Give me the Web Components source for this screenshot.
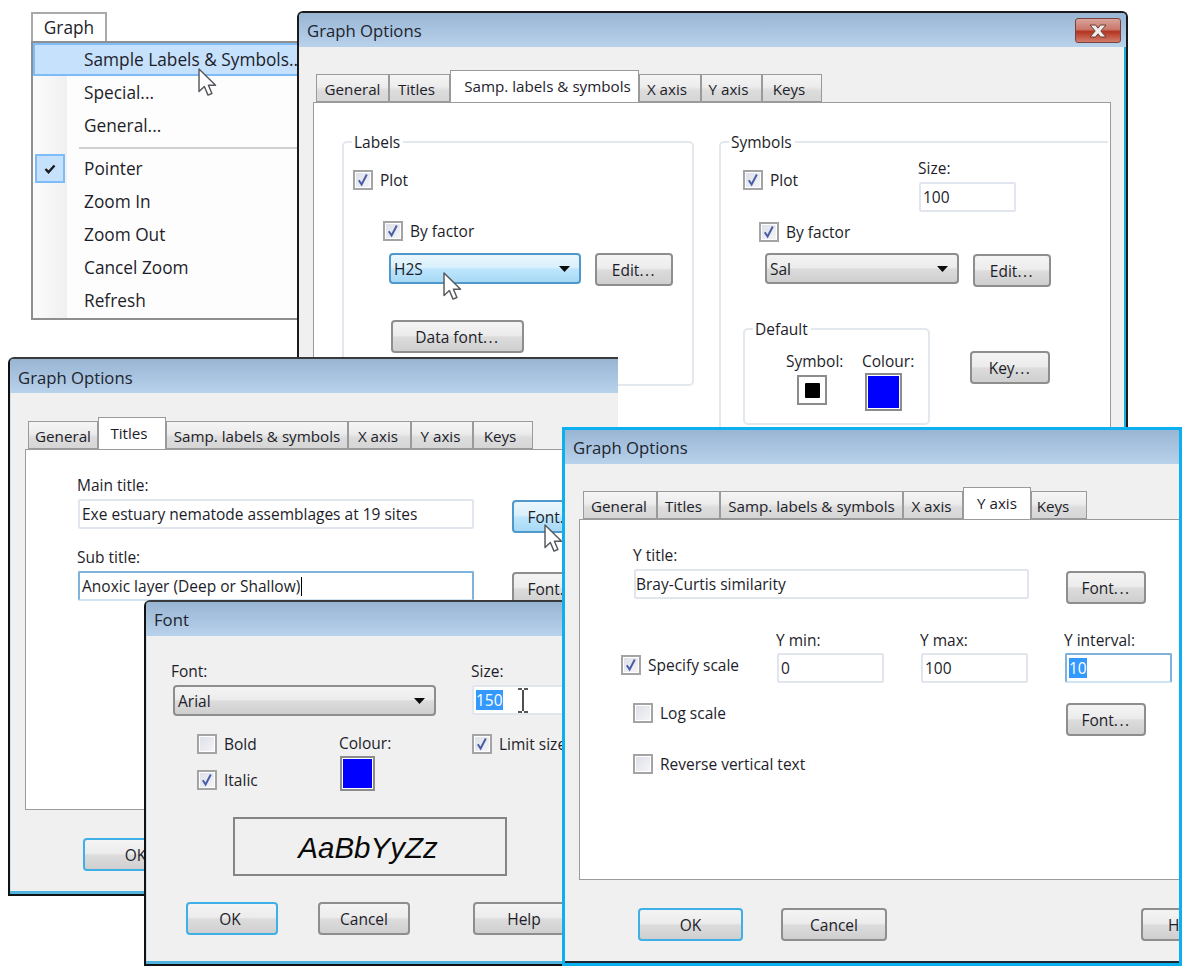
<!DOCTYPE html>
<html>
<head>
<meta charset="utf-8">
<title>Graph Options</title>
<style>
  html, body { margin: 0; background: #fff; }
  body { font: 15.5px/20px "Open Sans", "Noto Sans", sans-serif; color: #1d1d2a; width: 1190px; height: 972px; position: relative; overflow: hidden; }
  .row { display: flex; align-items: flex-start; }
  .col { display: flex; flex-direction: column; align-items: flex-start; flex: none; }
  .dots { font-style: normal; letter-spacing: 1.5px; }
</style>
</head>
<body>

<graph-menu style="z-index:1">
  <menu-item hot>Sample Labels &amp; Symbols...</menu-item>
  <menu-item>Special...</menu-item>
  <menu-item>General...</menu-item>
  <menu-item sep></menu-item>
  <menu-item checked>Pointer</menu-item>
  <menu-item>Zoom In</menu-item>
  <menu-item>Zoom Out</menu-item>
  <menu-item>Cancel Zoom</menu-item>
  <menu-item>Refresh</menu-item>
</graph-menu>
<ui-cursor style="left:198px;top:68px;z-index:2"></ui-cursor>

<!-- back window, samp labels tab -->
<dlg-window heading="Graph Options" closable frame="back" style="left:297px;top:11px;width:831px;height:430px;z-index:3">
  <tab-strip style="margin:23px 0 0 17px">
    <tab-item style="width:73px">General</tab-item>
    <tab-item style="width:61px;padding-right:6px">Titles</tab-item>
    <tab-item active style="width:189px;padding-left:6px">Samp. labels &amp; symbols</tab-item>
    <tab-item style="width:62px;padding-right:6px">X axis</tab-item>
    <tab-item style="width:61px;padding-right:6px">Y axis</tab-item>
    <tab-item style="width:60px;padding-right:6px">Keys</tab-item>
  </tab-strip>
  <tab-panel style="margin-left:14px;width:798px;height:340px;padding-top:29px">
    <div class="row">
      <ui-group legend="Labels" style="margin-left:28px;width:352px;height:254px">
        <ui-check checked style="margin:18px 0 0 9px">Plot</ui-check>
        <div><ui-check checked style="margin:31px 0 0 39px">By factor</ui-check></div>
        <div class="row" style="margin:12px 0 0 45px">
          <ui-combo hot style="width:192px">H2S</ui-combo>
          <ui-btn style="width:78px;margin:0 0 0 14px">Edit<i class="dots">...</i></ui-btn>
        </div>
        <ui-btn style="width:133px;margin:34px 0 0 47px">Data font<i class="dots">...</i></ui-btn>
      </ui-group>
      <ui-group legend="Symbols" open-end style="margin-left:25px;width:389px;height:320px">
        <div class="row" style="margin-top:6px">
          <ui-check checked style="margin:12px 0 0 22px;width:175px">Plot</ui-check>
          <div class="col">
            <ui-label>Size:</ui-label>
            <ui-field style="width:97px;margin:4px 0 0 1px">100</ui-field>
          </div>
        </div>
        <ui-check checked style="margin:10px 0 0 38px">By factor</ui-check>
        <div class="row" style="margin:11px 0 0 44px">
          <ui-combo style="width:194px">Sal</ui-combo>
          <ui-btn style="width:78px;margin:1px 0 0 14px">Edit<i class="dots">...</i></ui-btn>
        </div>
        <div class="row" style="margin:32px 0 0 22px">
          <ui-group legend="Default" style="width:187px;height:106px">
            <div class="row" style="margin:12px 0 0 41px">
              <div class="col" style="width:76px">
                <ui-label>Symbol:</ui-label>
                <ui-swatch mark style="width:30px;height:30px;margin:4px 0 0 11px"></ui-swatch>
              </div>
              <div class="col">
                <ui-label>Colour:</ui-label>
                <ui-swatch style="width:37px;height:38px;margin:2px 0 0 3px"></ui-swatch>
              </div>
            </div>
          </ui-group>
          <ui-btn style="width:80px;margin:32px 0 0 40px">Key<i class="dots">...</i></ui-btn>
        </div>
      </ui-group>
    </div>
  </tab-panel>
  <ui-cursor style="left:144px;top:259px"></ui-cursor>
</dlg-window>

<!-- titles tab -->
<dlg-window heading="Graph Options" frame="clip" style="left:8px;top:357px;width:610px;height:539px;z-index:4;--tb:3px">
  <tab-strip style="margin:24px 0 0 18px">
    <tab-item style="width:70px">General</tab-item>
    <tab-item active style="width:68px;padding-right:6px">Titles</tab-item>
    <tab-item style="width:182px">Samp. labels &amp; symbols</tab-item>
    <tab-item style="width:63px;padding-right:3px">X axis</tab-item>
    <tab-item style="width:62px;padding-right:3px">Y axis</tab-item>
    <tab-item style="width:60px;padding-right:6px">Keys</tab-item>
  </tab-strip>
  <tab-panel style="margin-left:15px;width:576px;height:361px;padding-top:25px">
    <ui-label style="margin-left:51px">Main title:</ui-label>
    <div class="row" style="margin-left:52px">
      <ui-field style="width:396px;margin-top:4px">Exe estuary nematode assemblages at 19 sites</ui-field>
      <ui-btn hot style="width:80px;margin:5px 0 0 38px">Font<i class="dots">...</i></ui-btn>
    </div>
    <ui-label style="margin:14px 0 0 51px">Sub title:</ui-label>
    <div class="row" style="margin-left:52px">
      <ui-field focus caret style="width:396px;margin-top:4px">Anoxic layer (Deep or Shallow)</ui-field>
      <ui-btn style="width:80px;margin:5px 0 0 38px">Font<i class="dots">...</i></ui-btn>
    </div>
  </tab-panel>
  <div class="row" style="margin:28px 0 0 73px">
    <ui-btn focus style="width:105px">OK</ui-btn>
  </div>
  <ui-cursor style="left:534px;top:165px"></ui-cursor>
</dlg-window>

<!-- font picker -->
<dlg-window heading="Font" frame="clip" style="left:144px;top:600px;width:430px;height:366px;z-index:5">
  <div class="row" style="margin:25px 0 0 25px">
    <div class="col" style="width:300px">
      <ui-label>Font:</ui-label>
      <ui-combo style="width:263px;margin:4px 0 0 2px">Arial</ui-combo>
    </div>
    <div class="col">
      <ui-label>Size:</ui-label>
      <ui-field selected style="width:120px;margin:4px 0 0 1px">150</ui-field>
    </div>
  </div>
  <div class="row" style="margin:18px 0 0 51px">
    <div class="col" style="width:142px">
      <ui-check>Bold</ui-check>
      <ui-check checked style="margin-top:16px">Italic</ui-check>
    </div>
    <div class="col" style="width:133px;margin-top:-1px">
      <ui-label>Colour:</ui-label>
      <ui-swatch style="width:35px;height:35px;margin:3px 0 0 1px"></ui-swatch>
    </div>
    <ui-check checked>Limit size</ui-check>
  </div>
  <font-preview style="margin:26px 0 0 87px;width:274px;height:59px">AaBbYyZz</font-preview>
  <div class="row" style="margin:26px 0 0 40px">
    <ui-btn focus style="width:92px;padding-right:4px">OK</ui-btn>
    <ui-btn style="width:92px;margin-left:40px">Cancel</ui-btn>
    <ui-btn style="width:102px;margin-left:63px">Help</ui-btn>
  </div>
  <ui-ibeam style="left:371px;top:86px"></ui-ibeam>
</dlg-window>

<!-- y axis tab, front window -->
<dlg-window heading="Graph Options" frame="active" style="left:562px;top:427px;width:620px;height:539px;z-index:6">
  <tab-strip style="margin:23px 0 0 18px">
    <tab-item style="width:74px;padding-right:2px">General</tab-item>
    <tab-item style="width:63px;padding-right:10px">Titles</tab-item>
    <tab-item style="width:183px">Samp. labels &amp; symbols</tab-item>
    <tab-item style="width:60px;padding-right:3px">X axis</tab-item>
    <tab-item active style="width:68px">Y axis</tab-item>
    <tab-item style="width:56px;padding-right:12px">Keys</tab-item>
  </tab-strip>
  <tab-panel style="margin-left:14px;width:640px;height:361px;padding-top:25px">
    <ui-label style="margin-left:53px">Y title:</ui-label>
    <div class="row" style="margin-left:54px">
      <ui-field style="width:395px;margin-top:4px;padding-left:0">Bray-Curtis similarity</ui-field>
      <ui-btn style="width:80px;margin:6px 0 0 37px">Font<i class="dots">...</i></ui-btn>
    </div>
    <div class="row" style="margin:26px 0 0 41px">
      <ui-check checked style="margin-top:25px;width:155px">Specify scale</ui-check>
      <div class="col" style="width:144px">
        <ui-label>Y min:</ui-label>
        <ui-field style="width:107px;margin:3px 0 0 1px">0</ui-field>
      </div>
      <div class="col" style="width:144px">
        <ui-label>Y max:</ui-label>
        <ui-field style="width:107px;margin:3px 0 0 1px">100</ui-field>
      </div>
      <div class="col">
        <ui-label>Y interval:</ui-label>
        <ui-field focus selected style="width:107px;margin:3px 0 0 1px">10</ui-field>
      </div>
    </div>
    <div class="row" style="margin:20px 0 0 53px">
      <ui-check style="width:433px">Log scale</ui-check>
      <ui-btn style="width:80px">Font<i class="dots">...</i></ui-btn>
    </div>
    <ui-check style="margin:18px 0 0 53px">Reverse vertical text</ui-check>
  </tab-panel>
  <div class="row" style="margin:28px 0 0 73px">
    <ui-btn focus style="width:105px">OK</ui-btn>
    <ui-btn style="width:106px;margin-left:38px">Cancel</ui-btn>
    <ui-btn style="width:60px;margin-left:254px;justify-content:flex-start;padding-left:25px;border-right:0;border-radius:4px 0 0 4px">H</ui-btn>
  </div>
</dlg-window>

<script>
// shared gradients
const BTN_BG = 'linear-gradient(#f4f4f4 0,#ececec 46%,#dcdcdc 52%,#cfcfcf 100%)';
const HOT_BG = 'linear-gradient(#eaf6fd 0,#d9f0fc 46%,#bee6fd 52%,#a7d9f5 100%)';

function el(name, cls) {
  customElements.define(name, cls);
}

class GraphMenu extends HTMLElement {
  constructor() {
    super();
    this.attachShadow({ mode: 'open' }).innerHTML = `
      <style>
        :host { position: absolute; left: 31px; top: 12px; display: block; width: 290px; font-size: 17.3px; }
        .tab { width: 72px; border: 2px solid #a9a9a9; border-bottom: 0; background: #fff;
               height: 27px; line-height: 28px; text-align: center; }
        .list { border: 2px solid #8f8f8f; background:
                linear-gradient(90deg,#fbfbfb 0,#f0f0f0 34px,#fdfdfd 34px); height: 275px; }
      </style>
      <div class="tab">Graph</div>
      <div class="list"><slot></slot></div>`;
  }
}
el('graph-menu', GraphMenu);

class MenuItem extends HTMLElement {
  constructor() {
    super();
    const sep = this.hasAttribute('sep');
    this.attachShadow({ mode: 'open' }).innerHTML = `
      <style>
        :host { display: block; height: 33px; box-sizing: border-box; }
        :host([sep]) { height: 10px; padding-top: 5px; }
        .sep { margin-left: 46px; height: 2px; background: #d0d0d0; }
        .it { height: 33px; box-sizing: border-box; display: flex; align-items: center; padding: 0 0 0 51px; position: relative; white-space: nowrap; }
        :host([hot]) .it { background: #c6e1fb; border: 2px solid #7dbcf6; padding: 0 0 0 49px; width: 284px; }
        .chk { position: absolute; left: 2px; top: 2px; width: 26px; height: 25px; background: #c6e1fb; border: 2px solid #7dbcf6; display: flex; align-items: center; justify-content: center; }
      </style>
      ${sep ? '<div class="sep"></div>' : `<div class="it">${this.hasAttribute('checked') ? `
        <span class="chk"><svg width="12" height="10" viewBox="0 0 12 10"><path d="M1.5 5 L4.5 8.2 L10.5 1.5" fill="none" stroke="#1a1a1a" stroke-width="2.4"/></svg></span>` : ''}<slot></slot></div>`}`;
  }
}
el('menu-item', MenuItem);

class DlgWindow extends HTMLElement {
  constructor() {
    super();
    const heading = this.getAttribute('heading') || '';
    const closable = this.hasAttribute('closable');
    this.attachShadow({ mode: 'open' }).innerHTML = `
      <style>
        :host { position: absolute; display: block; box-sizing: border-box; background: #f0f0f0; overflow: hidden; }
        :host([frame="back"]) { border: 2px solid #1b1b1b; border-bottom: 0; border-radius: 6px 6px 0 0; box-shadow: inset -2px 0 0 #19a9e4; }
        :host([frame="clip"]) { border: 2px solid #111; border-top-color: #3a3a3a; border-right: 0; border-radius: 6px 0 0 0; box-shadow: inset 0 -3px 0 #4fb5de, inset 1px 0 0 #cfe0ef; }
        :host([frame="active"]) { border: 3px solid #0db0ee; box-shadow: inset 0 -2px 0 #1d2a33; }
        .bar { height: 34px; display: flex; align-items: center; justify-content: space-between; padding: var(--tb, 1px) 5px 0 8px;
               background: linear-gradient(#98b5d3, #b9d2ec); color: #20242c; font-size: 16.7px; box-sizing: border-box; }
        .close { width: 46px; height: 25px; box-sizing: border-box; border: 1.5px solid #7b423c; border-radius: 3px;
                 background: linear-gradient(#d9a39b 0,#c9776b 45%,#b2351f 55%,#d27d6c 100%); display: flex; align-items: center; justify-content: center; }
      </style>
      <div class="bar"><span>${heading}</span>${closable ? `
        <span class="close"><svg width="22" height="16" viewBox="0 0 22 16"><path d="M3 2h5.5L11 5.2 13.5 2H19l-5.2 6L19 14h-5.5L11 10.8 8.5 14H3l5.2-6z" fill="#eee" stroke="#6e3a33" stroke-width="1"/></svg></span>` : ''}</div>
      <slot></slot>`;
  }
}
el('dlg-window', DlgWindow);

class TabStrip extends HTMLElement {
  constructor() {
    super();
    this.attachShadow({ mode: 'open' }).innerHTML = `
      <style>:host { display: flex; align-items: flex-end; height: 32px; position: relative; z-index: 1; margin-bottom: -1px; font-size: 15.2px; }</style>
      <slot></slot>`;
  }
}
el('tab-strip', TabStrip);

class TabItem extends HTMLElement {
  constructor() {
    super();
    this.attachShadow({ mode: 'open' }).innerHTML = `
      <style>
        :host { display: flex; justify-content: center; align-items: center; box-sizing: border-box; height: 28px; flex: none;
                border: 1.5px solid #9a9a9a; border-bottom: 1px solid #9a9a9a; white-space: nowrap; padding-top: 2px;
                background: linear-gradient(#f5f5f5 0,#ececec 45%,#dcdcdc 60%,#d6d6d6 100%); }
        :host([active]) { height: 32px; background: #fff; border-bottom: 0; padding-bottom: 1px; padding-top: 0; }
      </style>
      <slot></slot>`;
  }
}
el('tab-item', TabItem);

class TabPanel extends HTMLElement {
  constructor() {
    super();
    this.attachShadow({ mode: 'open' }).innerHTML = `
      <style>:host { display: block; box-sizing: border-box; background: #fff; border: 1.5px solid #9b9b9b; flex: none; }</style>
      <slot></slot>`;
  }
}
el('tab-panel', TabPanel);

class UiGroup extends HTMLElement {
  constructor() {
    super();
    this.attachShadow({ mode: 'open' }).innerHTML = `
      <style>
        :host { display: block; box-sizing: border-box; flex: none; }
        fieldset { margin: 0; padding: 0; box-sizing: border-box; border: 2px solid #e2e8ee; border-radius: 5px; height: 100%; min-inline-size: 0; }
        :host([open-end]) fieldset { border-right: 0; border-bottom: 0; border-radius: 5px 0 0 0; }
        legend { margin-left: 8px; padding: 0 3px 0 2px; line-height: 20px; }
      </style>
      <fieldset><legend>${this.getAttribute('legend') || ''}</legend><slot></slot></fieldset>`;
  }
}
el('ui-group', UiGroup);

class UiLabel extends HTMLElement {
  constructor() {
    super();
    this.attachShadow({ mode: 'open' }).innerHTML = `
      <style>:host { display: block; line-height: 20px; white-space: nowrap; }</style><slot></slot>`;
  }
}
el('ui-label', UiLabel);

class UiCheck extends HTMLElement {
  constructor() {
    super();
    this.attachShadow({ mode: 'open' }).innerHTML = `
      <style>
        :host { display: flex; align-items: center; gap: 7px; line-height: 20px; white-space: nowrap; flex: none; box-sizing: border-box; }
        .box { width: 20px; height: 20px; box-sizing: border-box; border: 2px solid #a4a4a4; background: linear-gradient(135deg,#dcdfe8,#f6f6f8); flex: none;
               display: flex; align-items: center; justify-content: center; box-shadow: inset 0 0 0 1px #fff; }
      </style>
      <span class="box">${this.hasAttribute('checked') ? '<svg width="14" height="14" viewBox="0 0 14 14"><path d="M2.8 7.2 L5.6 11.5 L10.8 1.5" fill="none" stroke="#4a5ea8" stroke-width="2"/></svg>' : ''}</span><span><slot></slot></span>`;
  }
}
el('ui-check', UiCheck);

class UiBtn extends HTMLElement {
  constructor() {
    super();
    this.attachShadow({ mode: 'open' }).innerHTML = `
      <style>
        :host { display: flex; align-items: center; justify-content: center; box-sizing: border-box; height: 33px; flex: none; white-space: nowrap;
                border: 2px solid #8e8e8e; border-radius: 4px; background: ${BTN_BG}; }
        :host([focus]) { border-color: #3fb0e6; }
        :host([hot]) { border-color: #4e98cb; background: ${HOT_BG}; }
      </style>
      <span><slot></slot></span>`;
  }
}
el('ui-btn', UiBtn);

class UiCombo extends HTMLElement {
  constructor() {
    super();
    this.attachShadow({ mode: 'open' }).innerHTML = `
      <style>
        :host { display: flex; align-items: center; justify-content: space-between; box-sizing: border-box; height: 31px; padding: 0 9px 0 3px; flex: none;
                border: 2px solid #8e8e8e; border-radius: 4px; background: ${BTN_BG}; }
        :host([hot]) { border-color: #4e98cb; background: ${HOT_BG}; }
        svg { flex: none; }
      </style>
      <span><slot></slot></span>
      <svg width="11" height="6" viewBox="0 0 11 6"><path d="M0 0h11L5.5 6z" fill="#0c0c0c"/></svg>`;
  }
}
el('ui-combo', UiCombo);

class UiField extends HTMLElement {
  constructor() {
    super();
    const sel = this.hasAttribute('selected');
    this.attachShadow({ mode: 'open' }).innerHTML = `
      <style>
        :host { display: flex; align-items: center; box-sizing: border-box; height: 30px; padding-left: 2px; background: #fff; flex: none; white-space: nowrap;
                border: 2px solid #e1e6ee; border-radius: 2px; }
        :host([focus]) { border-color: #7fb3dc; border-bottom-color: #cfe3f3; }
        .sel { background: #3399ff; color: #fff; }
        .caret { display: inline-block; width: 1px; height: 19px; background: #000; margin-left: 1px; }
      </style>
      <span class="${sel ? 'sel' : ''}"><slot></slot></span>${this.hasAttribute('caret') ? '<span class="caret"></span>' : ''}`;
  }
}
el('ui-field', UiField);

class UiSwatch extends HTMLElement {
  constructor() {
    super();
    this.attachShadow({ mode: 'open' }).innerHTML = `
      <style>
        :host { display: flex; align-items: center; justify-content: center; box-sizing: border-box; flex: none;
                border: 2px solid #8c8c8c; background: #fff; padding: 1px; }
        .c { width: 100%; height: 100%; background: #0000ff; }
        .m { width: 15px; height: 15px; background: #000; border-radius: 1px; }
      </style>
      <div class="${this.hasAttribute('mark') ? 'm' : 'c'}"></div>`;
  }
}
el('ui-swatch', UiSwatch);

class FontPreview extends HTMLElement {
  constructor() {
    super();
    this.attachShadow({ mode: 'open' }).innerHTML = `
      <style>
        :host { display: flex; align-items: center; justify-content: center; box-sizing: border-box; border: 2px solid #858585; padding: 2px 4px 0 0;
                font: italic 29.5px "Liberation Sans", sans-serif; color: #0a0a0a; }
      </style>
      <slot></slot>`;
  }
}
el('font-preview', FontPreview);

class UiCursor extends HTMLElement {
  constructor() {
    super();
    this.attachShadow({ mode: 'open' }).innerHTML = `
      <style>:host { position: absolute; display: block; width: 20px; height: 29px; z-index: 9; } svg { display: block; }</style>
      <svg width="20" height="29" viewBox="0 0 13.8 20"><path d="M.7.7V16.2L4.4 12.8 6.9 18.7 9.6 17.6 7.2 11.9H12.1Z" fill="#fff" stroke="#55585c" stroke-width="1" stroke-linejoin="round"/></svg>`;
  }
}
el('ui-cursor', UiCursor);

class UiIbeam extends HTMLElement {
  constructor() {
    super();
    this.attachShadow({ mode: 'open' }).innerHTML = `
      <style>:host { position: absolute; display: block; width: 12px; height: 25px; z-index: 9; } svg { display: block; }</style>
      <svg width="12" height="25" viewBox="0 0 12 25"><path d="M1 1H5M7 1H11M6 2V23M1 24H5M7 24H11" fill="none" stroke="#222" stroke-width="1.6"/></svg>`;
  }
}
el('ui-ibeam', UiIbeam);
</script>
</body>
</html>
